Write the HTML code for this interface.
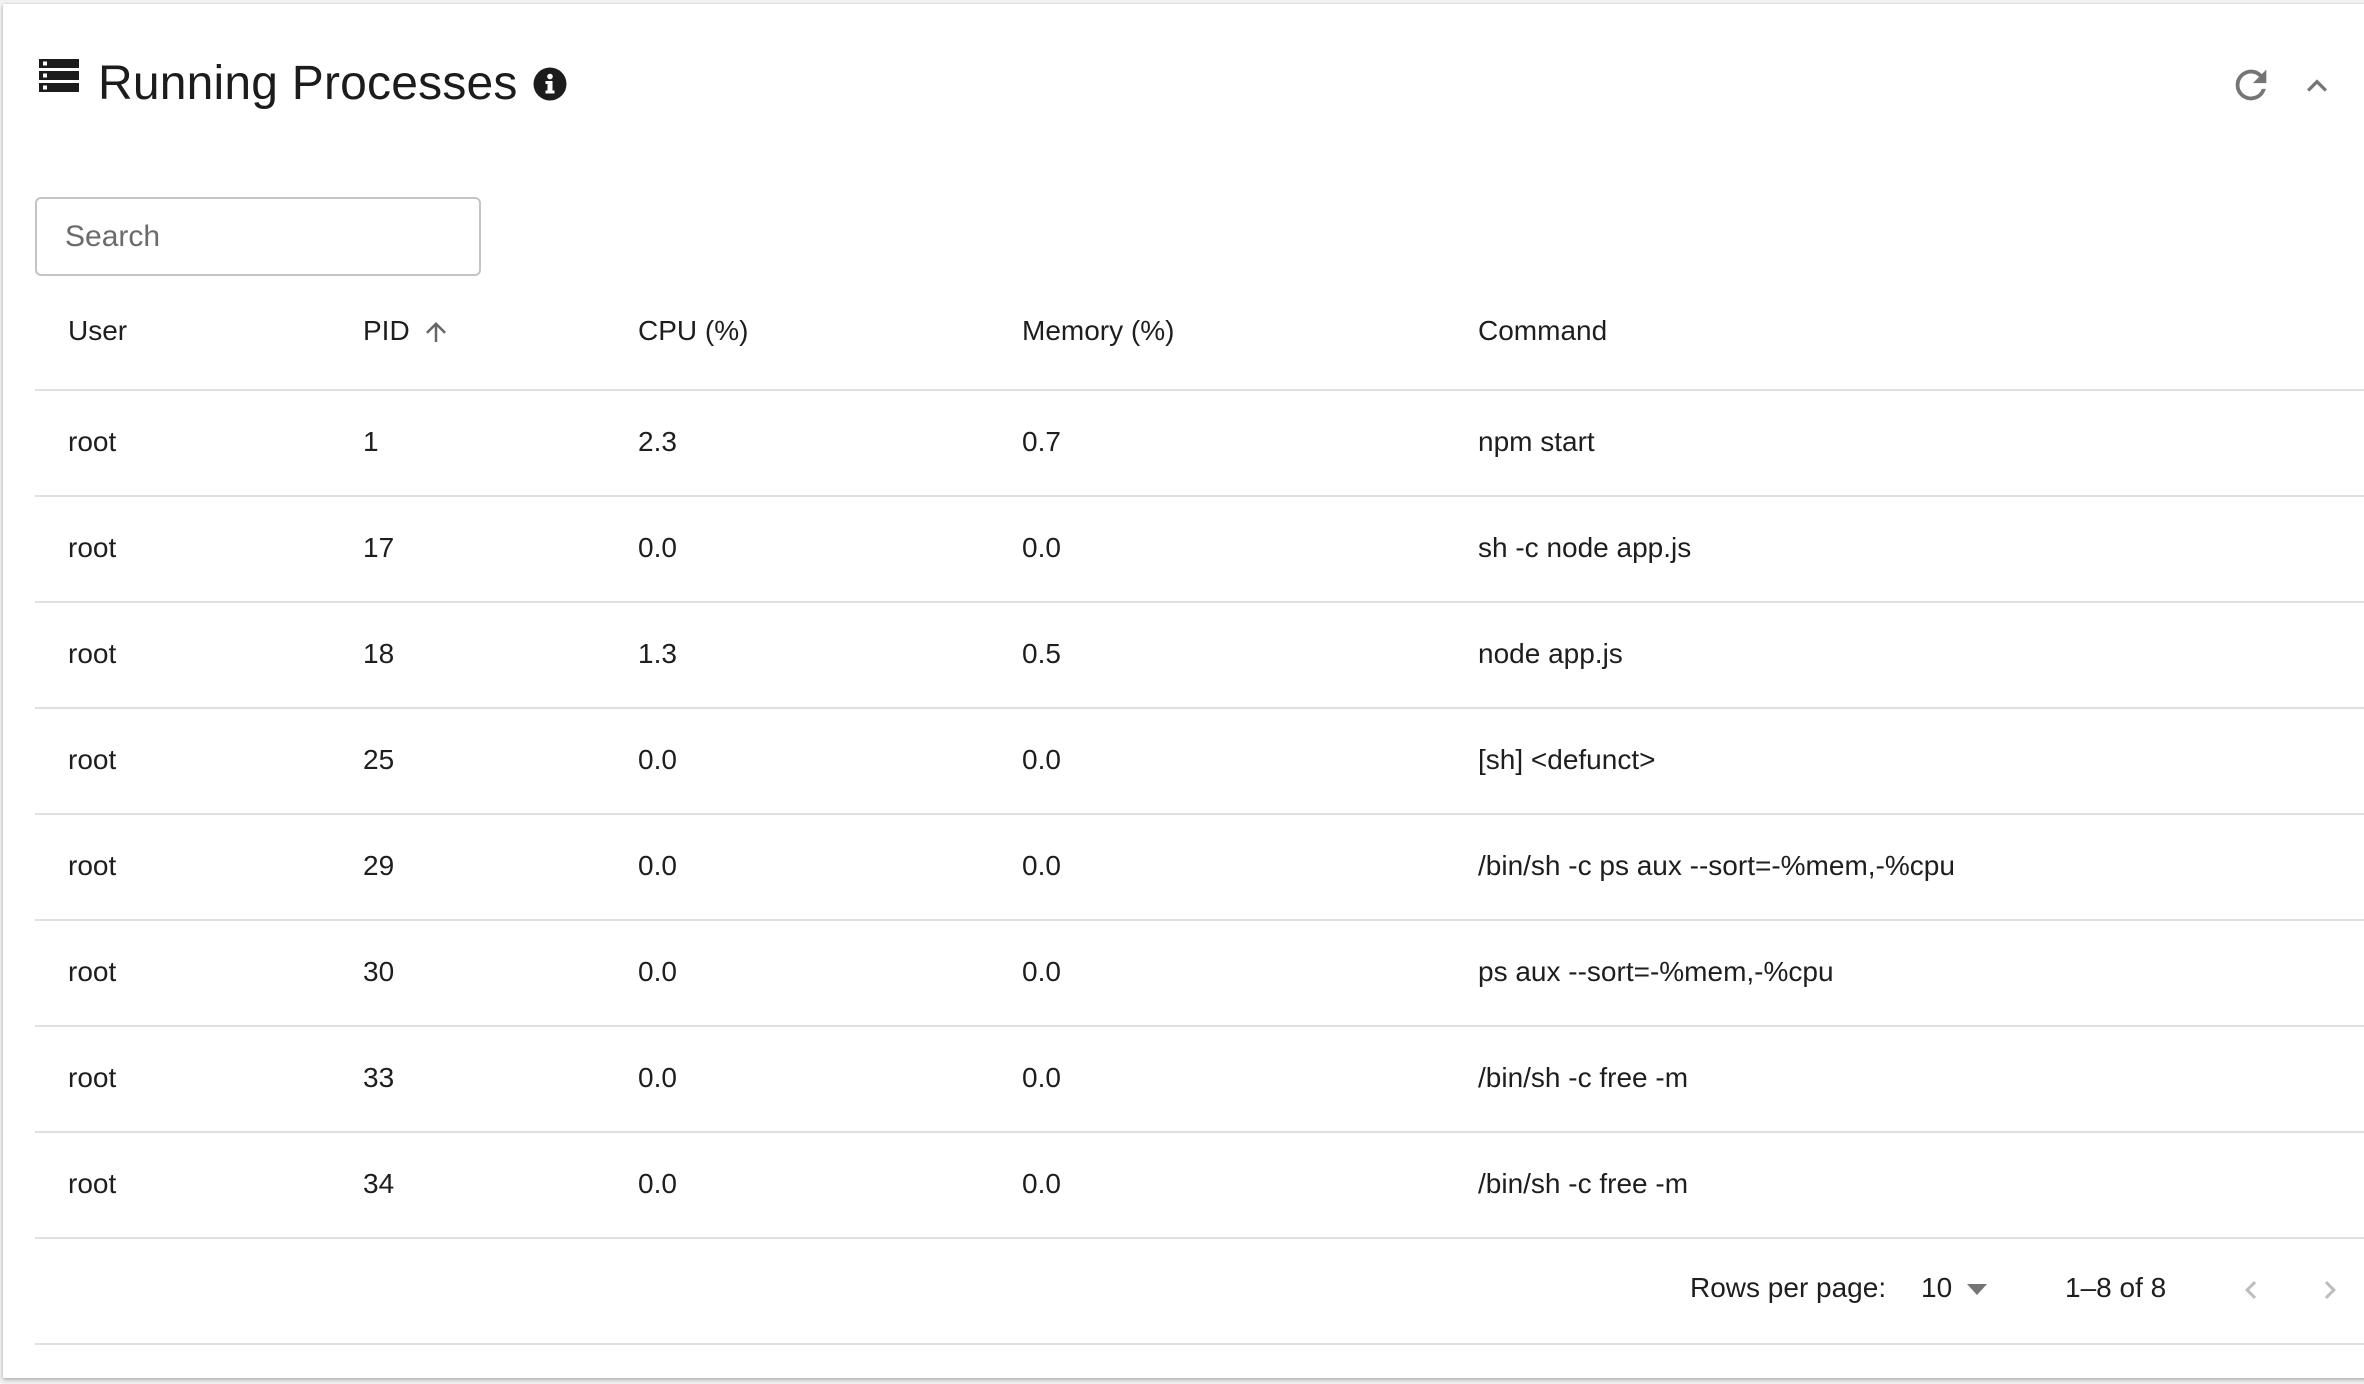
<!DOCTYPE html>
<html><head><meta charset="utf-8">
<style>
*{margin:0;padding:0;box-sizing:border-box}
html,body{width:2364px;height:1384px;overflow:hidden;background:#f2f2f2;font-family:"Liberation Sans",Arial,sans-serif;color:#222}
.card{position:absolute;left:3px;top:4px;width:2400px;height:1374px;background:#fff;box-shadow:0 2px 4px rgba(0,0,0,.25),0 0 2px rgba(0,0,0,.12)}
.abs{position:absolute}
.title{left:95px;top:48px;font-size:48px;line-height:64px;color:#1c1c1c;letter-spacing:0.2px}
.search{left:32px;top:193px;width:446px;height:79px;border:2px solid #c4c4c4;border-radius:6px;font-size:30px;color:#6b6b6b;padding-left:28px;line-height:75px}
.hline{position:absolute;left:32px;width:2400px;height:2px;background:#e0e0e0}
.cell{position:absolute;font-size:28px;line-height:32px;color:#1e1e1e}
.foot{position:absolute;font-size:28px;line-height:32px;color:#1e1e1e;top:1268px}
</style></head><body>
<div class="card">
  <svg class="abs" style="left:36px;top:55px" width="40" height="34" viewBox="0 0 40 34">
    <rect x="0" y="0" width="40" height="9" fill="#1c1c1c"/><rect x="0" y="12" width="40" height="9" fill="#1c1c1c"/><rect x="0" y="24" width="40" height="9" fill="#1c1c1c"/>
    <rect x="4" y="2.5" width="4" height="4" fill="#fff"/><rect x="4" y="14.5" width="4" height="4" fill="#fff"/><rect x="4" y="26.5" width="4" height="4" fill="#fff"/>
  </svg>
  <div class="abs title">Running Processes</div>
  <svg class="abs" style="left:530px;top:63px" width="34" height="34" viewBox="0 0 34 34">
    <circle cx="17" cy="17" r="16.5" fill="#1c1c1c"/>
    <rect x="14.5" y="14" width="5" height="12" fill="#fff"/><rect x="12.5" y="14" width="4" height="3" fill="#fff"/><rect x="12.5" y="23.5" width="9" height="3" fill="#fff"/>
    <circle cx="17" cy="9.5" r="2.8" fill="#fff"/>
  </svg>
  <svg class="abs" style="left:2225px;top:58px" width="46" height="46" viewBox="0 0 24 24">
    <path fill="#757575" d="M17.65 6.35A7.96 7.96 0 0 0 12 4a8 8 0 1 0 7.73 10h-2.08A6 6 0 1 1 12 6c1.66 0 3.14.69 4.22 1.78L13 11h7V4l-2.35 2.35z"/>
  </svg>
  <svg class="abs" style="left:2294px;top:62px" width="40" height="40" viewBox="0 0 24 24">
    <path fill="#757575" d="M7.41 15.41 12 10.83l4.59 4.58L18 14l-6-6-6 6z"/>
  </svg>
  <div class="abs search">Search</div>

  <div class="cell" style="left:65px;top:311px">User</div>
  <div class="cell" style="left:360px;top:311px">PID</div>
  <svg class="abs" style="left:418px;top:313px" width="30" height="30" viewBox="0 0 24 24"><path fill="#666" d="M4 12l1.41 1.41L11 7.83V20h2V7.83l5.58 5.59L20 12l-8-8-8 8z"/></svg>
  <div class="cell" style="left:635px;top:311px">CPU (%)</div>
  <div class="cell" style="left:1019px;top:311px">Memory (%)</div>
  <div class="cell" style="left:1475px;top:311px">Command</div>
  <div class="hline" style="top:385px"></div>

  <div class="cell" style="left:65px;top:422px">root</div><div class="cell" style="left:360px;top:422px">1</div><div class="cell" style="left:635px;top:422px">2.3</div><div class="cell" style="left:1019px;top:422px">0.7</div><div class="cell" style="left:1475px;top:422px">npm start</div>
  <div class="hline" style="top:491px"></div>
  <div class="cell" style="left:65px;top:528px">root</div><div class="cell" style="left:360px;top:528px">17</div><div class="cell" style="left:635px;top:528px">0.0</div><div class="cell" style="left:1019px;top:528px">0.0</div><div class="cell" style="left:1475px;top:528px">sh -c node app.js</div>
  <div class="hline" style="top:597px"></div>
  <div class="cell" style="left:65px;top:634px">root</div><div class="cell" style="left:360px;top:634px">18</div><div class="cell" style="left:635px;top:634px">1.3</div><div class="cell" style="left:1019px;top:634px">0.5</div><div class="cell" style="left:1475px;top:634px">node app.js</div>
  <div class="hline" style="top:703px"></div>
  <div class="cell" style="left:65px;top:740px">root</div><div class="cell" style="left:360px;top:740px">25</div><div class="cell" style="left:635px;top:740px">0.0</div><div class="cell" style="left:1019px;top:740px">0.0</div><div class="cell" style="left:1475px;top:740px">[sh] &lt;defunct&gt;</div>
  <div class="hline" style="top:809px"></div>
  <div class="cell" style="left:65px;top:846px">root</div><div class="cell" style="left:360px;top:846px">29</div><div class="cell" style="left:635px;top:846px">0.0</div><div class="cell" style="left:1019px;top:846px">0.0</div><div class="cell" style="left:1475px;top:846px">/bin/sh -c ps aux --sort=-%mem,-%cpu</div>
  <div class="hline" style="top:915px"></div>
  <div class="cell" style="left:65px;top:952px">root</div><div class="cell" style="left:360px;top:952px">30</div><div class="cell" style="left:635px;top:952px">0.0</div><div class="cell" style="left:1019px;top:952px">0.0</div><div class="cell" style="left:1475px;top:952px">ps aux --sort=-%mem,-%cpu</div>
  <div class="hline" style="top:1021px"></div>
  <div class="cell" style="left:65px;top:1058px">root</div><div class="cell" style="left:360px;top:1058px">33</div><div class="cell" style="left:635px;top:1058px">0.0</div><div class="cell" style="left:1019px;top:1058px">0.0</div><div class="cell" style="left:1475px;top:1058px">/bin/sh -c free -m</div>
  <div class="hline" style="top:1127px"></div>
  <div class="cell" style="left:65px;top:1164px">root</div><div class="cell" style="left:360px;top:1164px">34</div><div class="cell" style="left:635px;top:1164px">0.0</div><div class="cell" style="left:1019px;top:1164px">0.0</div><div class="cell" style="left:1475px;top:1164px">/bin/sh -c free -m</div>
  <div class="hline" style="top:1233px"></div>

  <div class="foot" style="left:1687px">Rows per page:</div>
  <div class="foot" style="left:1918px">10</div>
  <svg class="abs" style="left:1964px;top:1280px" width="20" height="12" viewBox="0 0 20 12"><path fill="#757575" d="M0 0h20L10 11z"/></svg>
  <div class="foot" style="left:2062px">1–8 of 8</div>
  <svg class="abs" style="left:2230px;top:1268px" width="36" height="36" viewBox="0 0 24 24"><path fill="#bdbdbd" d="M15.41 7.41 14 6l-6 6 6 6 1.41-1.41L10.83 12z"/></svg>
  <svg class="abs" style="left:2309px;top:1268px" width="36" height="36" viewBox="0 0 24 24"><path fill="#bdbdbd" d="M10 6 8.59 7.41 13.17 12l-4.58 4.59L10 18l6-6z"/></svg>
  <div class="hline" style="top:1339px"></div>
</div>
</body></html>
